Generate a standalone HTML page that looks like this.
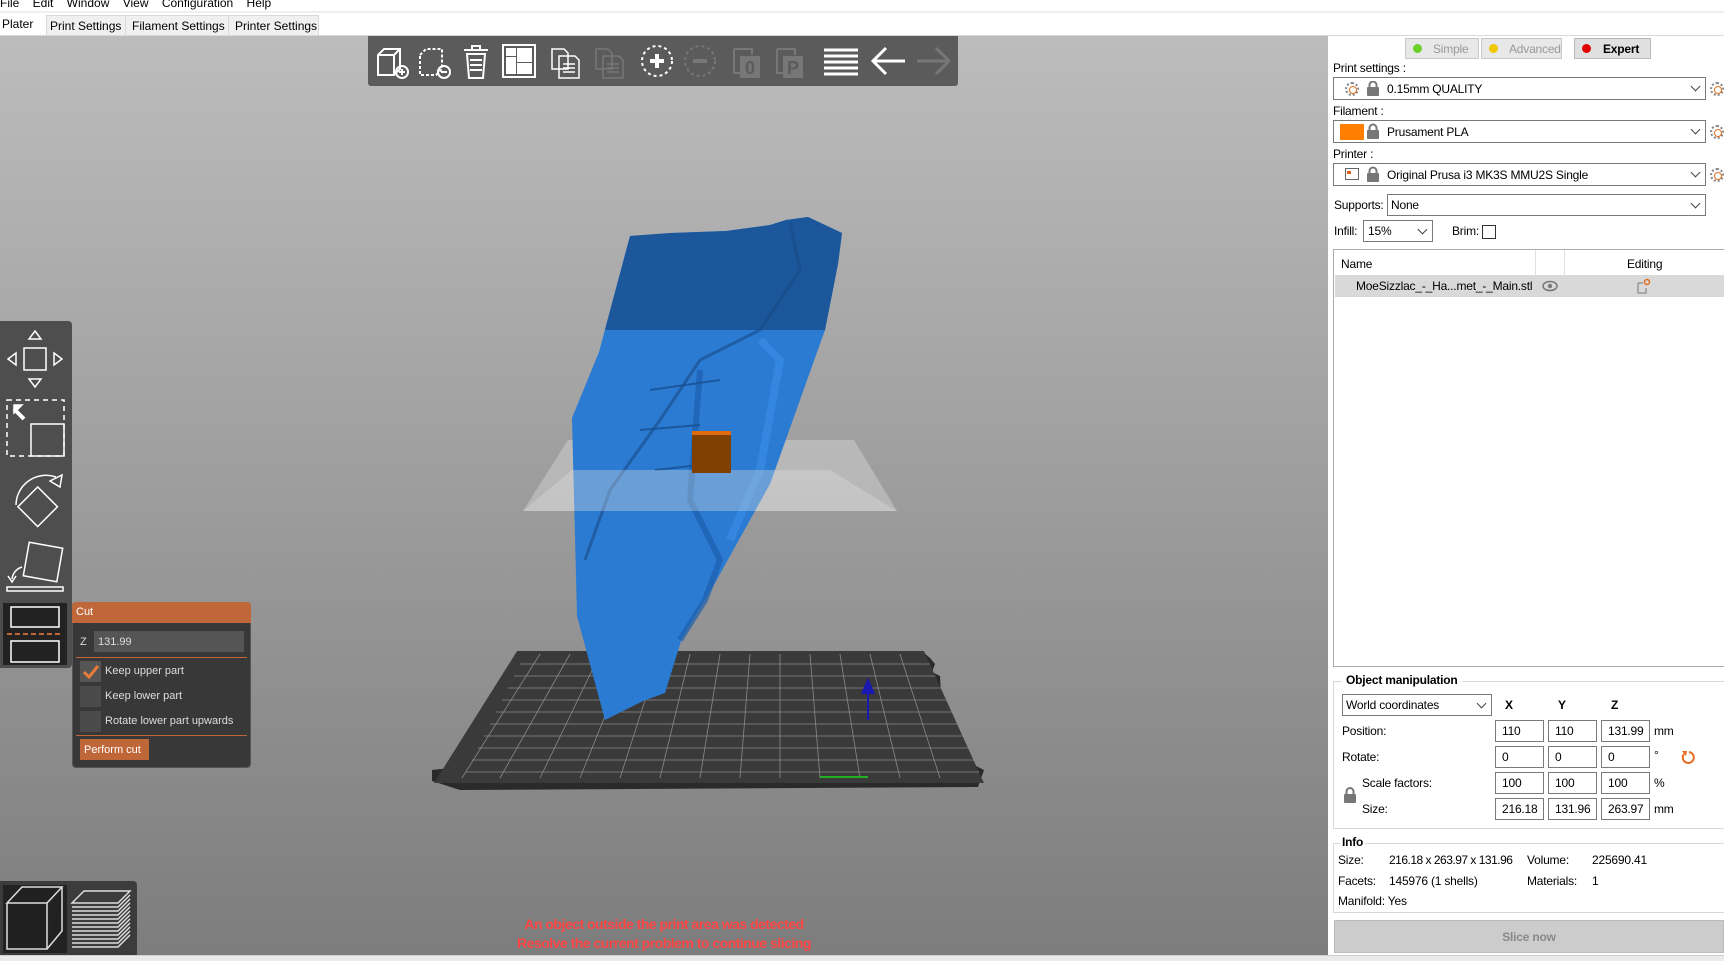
<!DOCTYPE html>
<html><head><meta charset="utf-8"><style>
*{margin:0;padding:0;box-sizing:border-box}
body{width:1724px;height:961px;overflow:hidden;background:#fff;font-family:"Liberation Sans",sans-serif;font-size:12px;color:#000;position:relative}
.a{position:absolute}
.t{position:absolute;white-space:nowrap}
.combo{position:absolute;border:1px solid #7a7a7a;background:#fff;height:23px}
.chev{position:absolute;right:6px;top:5px;width:7px;height:7px;border-right:1px solid #444;border-bottom:1px solid #444;transform:rotate(45deg)}
.fld{position:absolute;border:1px solid #7a7a7a;background:#fff;width:49px;height:22px;padding:3px 0 0 6px;font-size:12px}
.gear{position:absolute;width:14px;height:14px;border-radius:50%;border:2px dotted #888;}
.gear:after{content:"";position:absolute;left:2px;top:2px;width:6px;height:6px;border-radius:50%;border:1.5px solid #e07020}
.sb{letter-spacing:-0.2px}
</style></head><body>
<!-- menu -->
<div class="t" style="left:0;top:-4px;font-size:12px">File&nbsp;&nbsp;&nbsp;&nbsp;Edit&nbsp;&nbsp;&nbsp;&nbsp;Window&nbsp;&nbsp;&nbsp;&nbsp;View&nbsp;&nbsp;&nbsp;&nbsp;Configuration&nbsp;&nbsp;&nbsp;&nbsp;Help</div>
<div class="a" style="left:0;top:11px;width:1724px;height:2px;background:#f0f0f0"></div>
<div class="a" style="left:0;top:13px;width:1724px;height:23px;background:#fff;border-bottom:1px solid #d9d9d9"></div>
<div class="t" style="left:2px;top:17px">Plater</div>
<div class="a" style="left:46px;top:15px;width:273px;height:21px;background:#f0f0f0;border:1px solid #d9d9d9"></div>
<div class="a" style="left:125px;top:15px;width:1px;height:21px;background:#d9d9d9"></div>
<div class="a" style="left:228px;top:15px;width:1px;height:21px;background:#d9d9d9"></div>
<div class="t" style="left:50px;top:19px">Print Settings</div>
<div class="t" style="left:132px;top:19px">Filament Settings</div>
<div class="t" style="left:235px;top:19px">Printer Settings</div>

<!-- viewport -->
<div class="a" style="left:0;top:36px;width:1328px;height:919px;background:linear-gradient(#bcbcbc,#7d7d7d)"></div>
<div class="a" style="left:0;top:955px;width:1724px;height:6px;background:#eaeaea;border-top:1px solid #d0d0d0"></div>

<!-- toolbar -->
<div class="a" style="left:368px;top:36px;width:590px;height:50px;background:#5b5b5b;border-radius:0 0 3px 3px"></div>
<svg class="a" style="left:368px;top:36px" width="590" height="50" fill="none" stroke="#fff" stroke-width="2">
 <g transform="translate(24,25)"><path d="M-14 -6 L-8 -12 H8 V8 L2 14 H-14 Z M-14 -6 H2 V14 M2 -6 L8 -12"/><circle cx="10" cy="11" r="6"/><path d="M7 11h6M10 8v6"/></g>
 <g transform="translate(66,25)"><path d="M-14 -6 L-8 -12 H8 V8 L2 14 H-14 Z" stroke-dasharray="3 2"/><circle cx="10" cy="11" r="6"/><path d="M7 11h6"/></g>
 <g transform="translate(108,25)"><path d="M-12 -11h24M-4 -11v-4h8v4M-9 -7h18l-2 24h-14Z M-6 -1h12M-6 4h12M-6 9h12"/></g>
 <g transform="translate(151,25)"><rect x="-16" y="-16" width="32" height="32"/><rect x="-12" y="-12" width="8" height="6" fill="#fff"/><rect x="-12" y="-3" width="8" height="15" fill="#fff"/><rect x="-1" y="-12" width="13" height="12" fill="#fff"/><rect x="-1" y="3" width="13" height="9" fill="#fff"/></g>
 <g transform="translate(198,25)" stroke-width="1.5"><path d="M-14 -12h12l4 4v16h-16Z M-7 -5h16l4 4v18h-20Z M-3 3h12M-3 7h12M-3 11h12"/></g>
 <g transform="translate(242,25)" stroke="#777" stroke-width="1.5"><path d="M-14 -12h12l4 4v16h-16Z M-7 -5h16l4 4v18h-20Z M-3 3h12M-3 7h12M-3 11h12"/></g>
 <g transform="translate(289,25)"><circle r="15" stroke-dasharray="3 3"/><path d="M-7 0h14M0 -7v14" stroke-width="4"/></g>
 <g transform="translate(332,25)" stroke="#777"><circle r="15" stroke-dasharray="3 3"/><path d="M-7 0h14" stroke-width="4"/></g>
 <g transform="translate(383,25)"><path d="M-17 -12h18v6M-17 -12v24h6" stroke="#777"/><rect x="-11" y="-5" width="20" height="22" fill="#777" stroke="none"/><text x="-1" y="13" font-family="Liberation Sans" font-weight="bold" font-size="18" fill="#5b5b5b" stroke="none" text-anchor="middle">0</text></g>
 <g transform="translate(426,25)"><path d="M-17 -12h18v6M-17 -12v24h6" stroke="#777"/><rect x="-11" y="-5" width="20" height="22" fill="#777" stroke="none"/><text x="-1" y="13" font-family="Liberation Sans" font-weight="bold" font-size="18" fill="#5b5b5b" stroke="none" text-anchor="middle">P</text></g>
 <g transform="translate(473,25)"><path d="M-17 -11h34M-17 -5h34M-17 1h34M-17 7h34M-17 13h34" stroke-width="3"/></g>
 <g transform="translate(521,25)"><path d="M-15 0h31M-3 -13l-13 13 13 13" stroke-width="3"/></g>
 <g transform="translate(565,25)"><path d="M-16 0h31M3 -13l13 13-13 13" stroke="#777" stroke-width="3"/></g>
</svg>

<!-- bed & model -->
<svg class="a" style="left:0;top:0" width="1328" height="955">
 <defs>
  <clipPath id="bed"><polygon points="517,651 924,651 984,783 434,783"/></clipPath>
  <clipPath id="top"><rect x="0" y="0" width="1328" height="330"/></clipPath>
 </defs>
 <polygon points="530,651 922,651 930,658 935,664 932,672 940,676 944,752 960,758 984,770 978,787 460,790 432,781 432,770 468,766 470,752 490,746 494,700 510,690 512,672" fill="#2a2a2a"/>
 <g clip-path="url(#bed)" stroke="#8a8a8a" stroke-width="0.8">
  <polygon points="517,651 924,651 984,783 434,783" fill="#3a3a3a" stroke="none"/>
  <path d="M540 654 L462 778M570 654 L500 778M600 654 L540 778M630 654 L580 778M660 654 L620 778M690 654 L660 778M720 654 L700 778M750 654 L740 778M780 654 L780 778M810 654 L820 778M840 654 L860 778M870 654 L900 778M900 654 L940 778"/>
  <path d="M520 664H930M514 676H936M508 688H942M502 700H948M496 712H954M490 724H960M484 736H966M478 748H972M472 760H978M466 772H984" />
 </g>
 <path d="M868 720 v-40 M862 694 l6 -14 6 14" stroke="#1a1ab0" stroke-width="2" fill="#1a1ab0"/>
 <path d="M820 777 h48" stroke="#20b020" stroke-width="2"/>
 <polygon points="568,440 854,440 897,511 523,511" fill="#d8d8d8" opacity="0.45"/>
 <polygon points="630,236 671,233 726,231 770,225 786,220 808,217 842,233 838,264 825,330 770,484 715,583 682,638 665,693 643,701 605,720 577,616 572,418 599,352" fill="#2b7bd3"/>
 <polygon clip-path="url(#top)" points="630,236 671,233 726,231 770,225 786,220 808,217 842,233 838,264 825,330 770,484 715,583 682,638 665,693 643,701 605,720 577,616 572,418 599,352" fill="#1d579b"/>
 <path d="M790 222 L800 270 L760 330 L700 360 L660 420 L610 490 L585 560" stroke="#174a85" stroke-width="3" fill="none" opacity="0.6"/>
 <path d="M700 370 L690 500 L720 560 L705 600 L680 640" stroke="#1d5fae" stroke-width="6" fill="none" opacity="0.7"/>
 <path d="M760 340 L780 360 L760 470 L730 540" stroke="#3a8ee8" stroke-width="8" fill="none" opacity="0.6"/>
 <path d="M640 430 L700 425 M655 470 L700 465 M650 390 L720 380" stroke="#184f90" stroke-width="2" opacity="0.8"/>
 <polygon points="572,470 830,470 897,511 523,511" fill="#e0e0e0" opacity="0.35"/>
 <rect x="692" y="434" width="39" height="39" fill="#7e3f00"/><rect x="692" y="431" width="39" height="4" fill="#e06a10"/>
</svg>

<!-- left gizmo bar -->
<div class="a" style="left:0;top:321px;width:72px;height:347px;background:#4e4e4e;border-radius:0 4px 4px 0"></div>
<svg class="a" style="left:0;top:321px" width="72" height="347" fill="none" stroke="#fff" stroke-width="1.5">
 <rect x="24" y="27" width="22" height="22"/><path d="M35 10l6 8h-12z M35 66l6-8h-12z M8 38l8-6v12z M62 38l-8-6v12z"/>
 <rect x="7" y="79" width="57" height="56" stroke-dasharray="5 4"/><rect x="31" y="103" width="33" height="32"/><path d="M14 88l10 10" stroke-width="4"/><path d="M14 84h8l-8 8z" fill="#fff"/>
 <path d="M16 184 A30 30 0 0 1 56 156" /><path d="M50 160l12-6-2 12z"/><rect x="24" y="171" width="28" height="28" transform="rotate(45 37 185)"/>
 <rect x="26" y="224" width="34" height="34" transform="rotate(10 43 241)"/><rect x="7" y="266" width="56" height="4"/><path d="M22 246 A14 14 0 0 0 12 258 M8 255l4 6 4-6"/>
 <rect x="3" y="282" width="64" height="62" fill="#222" stroke="none"/><rect x="11" y="286" width="48" height="20"/><rect x="11" y="320" width="48" height="21"/><path d="M7 313h56" stroke="#c0673a" stroke-dasharray="5 3" stroke-width="2"/>
</svg>

<!-- cut panel -->
<div class="a" style="left:72px;top:602px;width:179px;height:166px;background:#383838;border-radius:4px;border:1px solid #555"></div>
<div class="a" style="left:72px;top:602px;width:179px;height:21px;background:#c0673a;border-radius:4px 4px 0 0"></div>
<div class="t" style="left:76px;top:606px;color:#fff;font-size:11px">Cut</div>
<div class="t" style="left:80px;top:636px;color:#ddd;font-size:11px">Z</div>
<div class="a" style="left:94px;top:631px;width:150px;height:21px;background:#555"></div>
<div class="t" style="left:98px;top:636px;color:#ddd;font-size:11px">131.99</div>
<div class="a" style="left:76px;top:657px;width:171px;height:1px;background:#c0673a"></div>
<div class="a" style="left:80px;top:661px;width:21px;height:21px;background:#555"></div>
<svg class="a" style="left:80px;top:661px" width="21" height="21"><path d="M4 11l5 5 9-11" stroke="#e87a3a" stroke-width="3" fill="none"/></svg>
<div class="t" style="left:105px;top:665px;color:#ddd;font-size:11px">Keep upper part</div>
<div class="a" style="left:80px;top:686px;width:21px;height:21px;background:#4a4a4a"></div>
<div class="t" style="left:105px;top:690px;color:#ddd;font-size:11px">Keep lower part</div>
<div class="a" style="left:80px;top:711px;width:21px;height:21px;background:#4a4a4a"></div>
<div class="t" style="left:105px;top:715px;color:#ddd;font-size:11px">Rotate lower part upwards</div>
<div class="a" style="left:76px;top:735px;width:171px;height:1px;background:#c0673a"></div>
<div class="a" style="left:80px;top:739px;width:69px;height:21px;background:#c0673a"></div>
<div class="t" style="left:84px;top:744px;color:#fff;font-size:11px">Perform cut</div>

<!-- bottom-left view -->
<div class="a" style="left:0;top:881px;width:137px;height:74px;background:#3c3c3c;border-radius:0 4px 0 0"></div>
<svg class="a" style="left:0;top:881px" width="137" height="74" fill="none" stroke="#ddd" stroke-width="1.5">
 <rect x="3" y="4" width="64" height="68" fill="#222" stroke="none"/>
 <path d="M7 22 L22 6 H62 L47 22 Z M7 22 V68 H47 V22 M47 68 L62 50 V6" fill="#202020"/>
 <path d="M72 22 L84 10 H130 L118 22 Z"/>
 <path d="M72 26h46l12-12M72 30h46l12-12M72 34h46l12-12M72 38h46l12-12M72 42h46l12-12M72 46h46l12-12M72 50h46l12-12M72 54h46l12-12M72 58h46l12-12M72 62h46l12-12M72 66h46l12-12"/>
</svg>
<div class="t" style="left:498px;top:916px;width:332px;text-align:center;color:#ff4444;font-weight:bold;font-size:14px;letter-spacing:-0.5px">An object outside the print area was detected</div>
<div class="t" style="left:498px;top:935px;width:332px;text-align:center;color:#ff4444;font-weight:bold;font-size:14px;letter-spacing:-0.5px">Resolve the current problem to continue slicing</div>

<!-- sidebar -->
<div class="sb">
<div class="a" style="left:1405px;top:38px;width:74px;height:21px;background:#e8e8e8;border:1px solid #c8c8c8"></div>
<div class="a" style="left:1413px;top:44px;width:9px;height:9px;border-radius:50%;background:#6ad02a"></div>
<div class="t" style="left:1433px;top:42px;color:#999">Simple</div>
<div class="a" style="left:1481px;top:38px;width:81px;height:21px;background:#e8e8e8;border:1px solid #c8c8c8"></div>
<div class="a" style="left:1489px;top:44px;width:9px;height:9px;border-radius:50%;background:#f0c800"></div>
<div class="t" style="left:1509px;top:42px;color:#999">Advanced</div>
<div class="a" style="left:1574px;top:38px;width:77px;height:21px;background:#e0e0e0;border:1px solid #b8b8b8"></div>
<div class="a" style="left:1582px;top:44px;width:9px;height:9px;border-radius:50%;background:#e00000"></div>
<div class="t" style="left:1603px;top:42px;font-weight:bold">Expert</div>

<div class="t" style="left:1333px;top:61px">Print settings :</div>
<div class="combo" style="left:1333px;top:77px;width:373px"><div class="chev"></div></div>
<div class="gear" style="left:1345px;top:82px"></div>
<div class="t" style="left:1387px;top:82px">0.15mm QUALITY</div>
<div class="gear" style="left:1710px;top:82px"></div>
<div class="t" style="left:1333px;top:104px">Filament :</div>
<div class="combo" style="left:1333px;top:120px;width:373px"><div class="chev"></div></div>
<div class="a" style="left:1340px;top:124px;width:24px;height:16px;background:#ff8000"></div>
<div class="t" style="left:1387px;top:125px">Prusament PLA</div>
<div class="gear" style="left:1710px;top:125px"></div>
<div class="t" style="left:1333px;top:147px">Printer :</div>
<div class="combo" style="left:1333px;top:163px;width:373px"><div class="chev"></div></div>
<div class="a" style="left:1345px;top:168px;width:14px;height:12px;border:1px solid #666"></div>
<div class="a" style="left:1347px;top:171px;width:4px;height:3px;background:#e06010"></div>
<div class="t" style="left:1387px;top:168px">Original Prusa i3 MK3S MMU2S Single</div>
<div class="gear" style="left:1710px;top:168px"></div>
<svg class="a" style="left:1367px;top:81px" width="12" height="105"><g fill="#777"><rect x="0" y="6" width="12" height="9" rx="1"/><path d="M2.5 6V4a3.5 3.5 0 0 1 7 0v2" stroke="#777" stroke-width="2" fill="none"/></g><g fill="#777" transform="translate(0,43)"><rect x="0" y="6" width="12" height="9" rx="1"/><path d="M2.5 6V4a3.5 3.5 0 0 1 7 0v2" stroke="#777" stroke-width="2" fill="none"/></g><g fill="#777" transform="translate(0,86)"><rect x="0" y="6" width="12" height="9" rx="1"/><path d="M2.5 6V4a3.5 3.5 0 0 1 7 0v2" stroke="#777" stroke-width="2" fill="none"/></g></svg>

<div class="t" style="left:1334px;top:198px">Supports:</div>
<div class="combo" style="left:1387px;top:194px;width:319px;height:22px"><div class="chev"></div></div>
<div class="t" style="left:1391px;top:198px">None</div>
<div class="t" style="left:1334px;top:224px">Infill:</div>
<div class="combo" style="left:1363px;top:220px;width:70px;height:22px"><div class="chev"></div></div>
<div class="t" style="left:1368px;top:224px">15%</div>
<div class="t" style="left:1452px;top:224px">Brim:</div>
<div class="a" style="left:1482px;top:225px;width:14px;height:14px;border:1px solid #333"></div>

<div class="a" style="left:1333px;top:249px;width:392px;height:418px;border:1px solid #aaa;border-right:none"></div>
<div class="a" style="left:1535px;top:250px;width:1px;height:25px;background:#e0e0e0"></div>
<div class="a" style="left:1564px;top:250px;width:1px;height:25px;background:#e0e0e0"></div>
<div class="t" style="left:1341px;top:257px">Name</div>
<div class="t" style="left:1627px;top:257px">Editing</div>
<div class="a" style="left:1335px;top:275px;width:389px;height:22px;background:#d9d9d9"></div>
<div class="t" style="left:1356px;top:279px">MoeSizzlac_-_Ha...met_-_Main.stl</div>
<svg class="a" style="left:1542px;top:279px" width="16" height="14"><ellipse cx="8" cy="7" rx="7" ry="4.5" fill="none" stroke="#777" stroke-width="1.5"/><circle cx="8" cy="7" r="2.2" fill="#777"/></svg>
<svg class="a" style="left:1637px;top:278px" width="14" height="16"><path d="M1 5h5M1 5v10h8v-5" stroke="#777" fill="none"/><circle cx="10" cy="4" r="2.5" fill="none" stroke="#e07020" stroke-width="1.5"/></svg>

<div class="a" style="left:1333px;top:681px;width:392px;height:148px;border:1px solid #d8d8d8;border-right:none"></div>
<div class="t" style="left:1342px;top:673px;padding:0 4px;background:#fff;font-weight:bold">Object manipulation</div>
<div class="combo" style="left:1342px;top:694px;width:150px;height:22px"><div class="chev"></div></div>
<div class="t" style="left:1346px;top:698px">World coordinates</div>
<div class="t" style="left:1505px;top:698px;font-weight:bold">X</div>
<div class="t" style="left:1558px;top:698px;font-weight:bold">Y</div>
<div class="t" style="left:1611px;top:698px;font-weight:bold">Z</div>
<div class="t" style="left:1342px;top:724px">Position:</div>
<div class="t" style="left:1342px;top:750px">Rotate:</div>
<div class="t" style="left:1362px;top:776px">Scale factors:</div>
<div class="t" style="left:1362px;top:802px">Size:</div>
<div class="fld" style="left:1495px;top:720px">110</div><div class="fld" style="left:1548px;top:720px">110</div><div class="fld" style="left:1601px;top:720px">131.99</div>
<div class="fld" style="left:1495px;top:746px">0</div><div class="fld" style="left:1548px;top:746px">0</div><div class="fld" style="left:1601px;top:746px">0</div>
<div class="fld" style="left:1495px;top:772px">100</div><div class="fld" style="left:1548px;top:772px">100</div><div class="fld" style="left:1601px;top:772px">100</div>
<div class="fld" style="left:1495px;top:798px">216.18</div><div class="fld" style="left:1548px;top:798px">131.96</div><div class="fld" style="left:1601px;top:798px">263.97</div>
<div class="t" style="left:1654px;top:724px">mm</div>
<div class="t" style="left:1654px;top:748px">°</div>
<div class="t" style="left:1654px;top:776px">%</div>
<div class="t" style="left:1654px;top:802px">mm</div>
<svg class="a" style="left:1680px;top:749px" width="16" height="16"><path d="M4 5 A5.5 5.5 0 1 0 9 3" stroke="#e86a20" stroke-width="2" fill="none"/><path d="M2 2l4 5 1-5z" fill="#e86a20"/></svg>
<svg class="a" style="left:1344px;top:787px" width="12" height="16"><rect x="0" y="7" width="12" height="9" rx="1" fill="#777"/><path d="M2.5 7V4.5a3.5 3.5 0 0 1 7 0V7" stroke="#777" stroke-width="2" fill="none"/></svg>

<div class="a" style="left:1333px;top:843px;width:392px;height:70px;border:1px solid #d8d8d8;border-right:none"></div>
<div class="t" style="left:1340px;top:835px;padding:0 2px;background:#fff;font-weight:bold">Info</div>
<div class="t" style="left:1338px;top:853px">Size:</div><div class="t" style="left:1389px;top:853px;letter-spacing:-0.5px">216.18 x 263.97 x 131.96</div>
<div class="t" style="left:1527px;top:853px">Volume:</div><div class="t" style="left:1592px;top:853px">225690.41</div>
<div class="t" style="left:1338px;top:874px">Facets:</div><div class="t" style="left:1389px;top:874px">145976 (1 shells)</div>
<div class="t" style="left:1527px;top:874px">Materials:</div><div class="t" style="left:1592px;top:874px">1</div>
<div class="t" style="left:1338px;top:894px">Manifold: Yes</div>

<div class="a" style="left:1334px;top:920px;width:390px;height:33px;background:#cccccc;border:1px solid #bbb"></div>
<div class="t" style="left:1334px;top:930px;width:390px;text-align:center;font-weight:bold;color:#888">Slice now</div>
</div>
</body></html>
